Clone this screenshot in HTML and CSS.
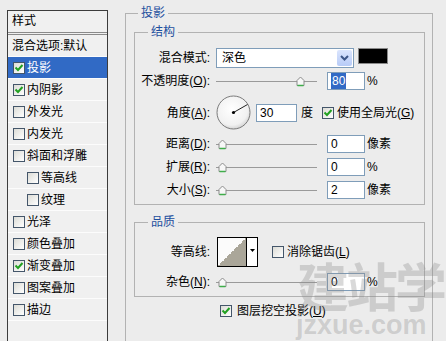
FILE: index.html
```html
<!DOCTYPE html>
<html lang="zh-CN">
<head>
  <meta charset="UTF-8">
  <title>图层样式 | 投影</title>
  <link rel="stylesheet" href="styles.css">
</head>
<body>
  <div class="dialog">
    <!-- style list on the left -->
    <div class="styles-list">
      <div class="list-head">样式</div>
      <div class="list-row plain">混合选项:默认</div>
      <div class="list-row selected"><span class="cb"><svg width="10" height="10" viewBox="0 0 10 10"><polyline points="1.5,4.5 4,7 8.5,2" fill="none" stroke="#21a121" stroke-width="2"/></svg></span>投影</div>
      <div class="list-row"><span class="cb"><svg width="10" height="10" viewBox="0 0 10 10"><polyline points="1.5,4.5 4,7 8.5,2" fill="none" stroke="#21a121" stroke-width="2"/></svg></span>内阴影</div>
      <div class="list-row"><span class="cb"></span>外发光</div>
      <div class="list-row"><span class="cb"></span>内发光</div>
      <div class="list-row"><span class="cb"></span>斜面和浮雕</div>
      <div class="list-row sub"><span class="cb"></span>等高线</div>
      <div class="list-row sub"><span class="cb"></span>纹理</div>
      <div class="list-row"><span class="cb"></span>光泽</div>
      <div class="list-row"><span class="cb"></span>颜色叠加</div>
      <div class="list-row"><span class="cb"><svg width="10" height="10" viewBox="0 0 10 10"><polyline points="1.5,4.5 4,7 8.5,2" fill="none" stroke="#21a121" stroke-width="2"/></svg></span>渐变叠加</div>
      <div class="list-row"><span class="cb"></span>图案叠加</div>
      <div class="list-row"><span class="cb"></span>描边</div>
    </div>

    <!-- settings on the right -->
    <div class="settings">
      <fieldset class="group outer">
        <legend class="legend-main">投影</legend>

        <fieldset class="group inner">
          <legend class="legend-sub">结构</legend>

          <div class="row">
            <div class="lbl">混合模式:</div>
            <div class="select">
              <span class="select-text">深色</span>
              <span class="select-btn"><svg width="9" height="6" viewBox="0 0 9 6"><polyline points="1,1 4.5,4.5 8,1" fill="none" stroke="#3d5687" stroke-width="2"/></svg></span>
            </div>
            <div class="swatch"></div>
          </div>

          <div class="row">
            <div class="lbl">不透明度(<u>O</u>):</div>
            <div class="slider"><svg class="thumb" style="margin-left: 80px" width="9" height="11" viewBox="0 0 9 11"><path d="M1 4.5 L4.5 1 L8 4.5 V9.5 H1 Z" fill="#f7f7f7" stroke="#8c8c8c"/><line x1="1.5" y1="9.5" x2="7.5" y2="9.5" stroke="#3fae4a" stroke-width="1.5"/></svg></div>
            <div class="num"><span class="sel-text">80</span></div>
            <span class="unit">%</span>
          </div>

          <div class="row tall">
            <div class="lbl">角度(<u>A</u>):</div>
            <svg class="dial" width="35" height="35" viewBox="0 0 35 35">
              <defs>
                <radialGradient id="dialFill" cx="45%" cy="40%" r="60%">
                  <stop offset="0" stop-color="#ffffff"/>
                  <stop offset="0.8" stop-color="#f1f1f1"/>
                  <stop offset="1" stop-color="#d6d6d6"/>
                </radialGradient>
              </defs>
              <circle cx="17.5" cy="17.5" r="16.5" fill="url(#dialFill)" stroke="#7a7a7a"/>
              <line x1="17.5" y1="17.5" x2="31.5" y2="9.5" stroke="#222" stroke-width="1"/>
              <circle cx="17.5" cy="17.5" r="1.6" fill="#000"/>
            </svg>
            <div class="num angle">30</div>
            <span class="unit deg">度</span>
            <span class="cb global"><svg width="10" height="10" viewBox="0 0 10 10"><polyline points="1.5,4.5 4,7 8.5,2" fill="none" stroke="#21a121" stroke-width="2"/></svg></span>
            <span class="cb-text">使用全局光(<u>G</u>)</span>
          </div>

          <div class="row">
            <div class="lbl">距离(<u>D</u>):</div>
            <div class="slider"><svg class="thumb" style="margin-left: 2px" width="9" height="11" viewBox="0 0 9 11"><path d="M1 4.5 L4.5 1 L8 4.5 V9.5 H1 Z" fill="#f7f7f7" stroke="#8c8c8c"/><line x1="1.5" y1="9.5" x2="7.5" y2="9.5" stroke="#3fae4a" stroke-width="1.5"/></svg></div>
            <div class="num">0</div>
            <span class="unit">像素</span>
          </div>

          <div class="row">
            <div class="lbl">扩展(<u>R</u>):</div>
            <div class="slider"><svg class="thumb" style="margin-left: 2px" width="9" height="11" viewBox="0 0 9 11"><path d="M1 4.5 L4.5 1 L8 4.5 V9.5 H1 Z" fill="#f7f7f7" stroke="#8c8c8c"/><line x1="1.5" y1="9.5" x2="7.5" y2="9.5" stroke="#3fae4a" stroke-width="1.5"/></svg></div>
            <div class="num">0</div>
            <span class="unit">%</span>
          </div>

          <div class="row">
            <div class="lbl">大小(<u>S</u>):</div>
            <div class="slider"><svg class="thumb" style="margin-left: 2px" width="9" height="11" viewBox="0 0 9 11"><path d="M1 4.5 L4.5 1 L8 4.5 V9.5 H1 Z" fill="#f7f7f7" stroke="#8c8c8c"/><line x1="1.5" y1="9.5" x2="7.5" y2="9.5" stroke="#3fae4a" stroke-width="1.5"/></svg></div>
            <div class="num">2</div>
            <span class="unit">像素</span>
          </div>
        </fieldset>

        <fieldset class="group inner quality">
          <legend class="legend-sub">品质</legend>

          <div class="row contour-row">
            <div class="lbl">等高线:</div>
            <div class="contour"></div>
            <div class="contour-drop"><svg width="5" height="3" viewBox="0 0 5 3"><path d="M0 0 H5 L2.5 3 Z" fill="#000"/></svg></div>
            <span class="cb aa"></span>
            <span class="cb-text">消除锯齿(<u>L</u>)</span>
          </div>

          <div class="row">
            <div class="lbl">杂色(<u>N</u>):</div>
            <div class="slider"><svg class="thumb" style="margin-left: 2px" width="9" height="11" viewBox="0 0 9 11"><path d="M1 4.5 L4.5 1 L8 4.5 V9.5 H1 Z" fill="#f7f7f7" stroke="#8c8c8c"/><line x1="1.5" y1="9.5" x2="7.5" y2="9.5" stroke="#3fae4a" stroke-width="1.5"/></svg></div>
            <div class="num">0</div>
            <span class="unit">%</span>
          </div>
        </fieldset>

        <div class="row knockout">
          <span class="cb"><svg width="10" height="10" viewBox="0 0 10 10"><polyline points="1.5,4.5 4,7 8.5,2" fill="none" stroke="#21a121" stroke-width="2"/></svg></span>
          <span class="cb-text">图层挖空投影(<u>U</u>)</span>
        </div>
      </fieldset>
    </div>
  </div>

  <!-- site watermark over the dialog -->
  <div class="watermark">
    <div class="wm-big">建站学</div>
    <div class="wm-small">jzxue.com</div>
  </div>
</body>
</html>
```

FILE: styles.css
```css
body {
  margin: 0;
  height: 341px;
  overflow: hidden;
  position: relative;
  background-color: #ececec;
  color: #000;
  font-family: "Liberation Sans", "Noto Sans CJK SC", sans-serif;
  font-size: 12px;
  line-height: 16px;
}

.dialog {
  display: flex;
  align-items: flex-start;
}

/* left list */
.styles-list {
  width: 99px;
  height: 331px;
  margin: 10px 0 0 7px;
  border: 1px solid #3c3c3c;
  border-bottom: none;
  background-color: #f0f0f0;
}

.list-head {
  height: 21px;
  line-height: 21px;
  padding-left: 4px;
  border-bottom: 3px double #8a8a8a;
}

.list-row {
  display: flex;
  align-items: center;
  height: 21px;
  padding-left: 5px;
  border-bottom: 1px solid #fcfcfc;
  white-space: nowrap;
}

.list-row.plain {
  padding-left: 4px;
}

.list-row.sub {
  padding-left: 19px;
}

.list-row.selected {
  background-color: #316ac5;
  color: #fff;
}

.list-row .cb {
  margin-right: 2px;
}

/* checkbox */
.cb {
  display: inline-flex;
  align-items: center;
  justify-content: center;
  flex: none;
  width: 10px;
  height: 10px;
  border: 1px solid #44566a;
  background: linear-gradient(135deg, #dcdcd6, #ffffff);
}

.cb-text {
  margin-left: 3px;
  white-space: nowrap;
}

/* right side */
.settings {
  margin: 5px 0 0 17px;
}

.group {
  margin: 0;
  min-width: 0;
  border: 1px solid #b2b2b2;
}

.group legend {
  padding: 0 3px;
  color: #1d4f9e;
  line-height: 16px;
}

.outer {
  box-sizing: border-box;
  width: 308px;
  height: 336px;
  padding: 3px 7px 0 8px;
  border-bottom: none;
}

.legend-main {
  margin-left: 4px;
}

.inner {
  padding: 8px 0 4px 0;
}

.legend-sub {
  margin-left: 13px;
}

.quality {
  margin-top: 9px;
  padding-top: 7px;
}

.row {
  display: flex;
  align-items: center;
  height: 20px;
  white-space: nowrap;
}

.row + .row {
  margin-top: 3px;
}

.row.tall {
  height: 37px;
}

.row.contour-row {
  height: 30px;
}

.quality .row + .row {
  margin-top: 5px;
}

.lbl {
  width: 75px;
  margin-right: 6px;
  text-align: right;
  flex: none;
}

/* blend mode dropdown */
.select {
  display: flex;
  align-items: center;
  box-sizing: border-box;
  width: 138px;
  height: 20px;
  border: 1px solid #7f9db9;
  background-color: #fff;
}

.select-text {
  padding-left: 5px;
}

.select-btn {
  display: flex;
  align-items: center;
  justify-content: center;
  margin-left: auto;
  margin-right: 1px;
  width: 15px;
  height: 16px;
  border-radius: 2px;
  background: linear-gradient(#dbe5fd, #b7cbf7);
}

.swatch {
  align-self: flex-start;
  width: 28px;
  height: 14px;
  margin-left: 4px;
  border: 1px solid #8a8a8a;
  background-color: #000;
}

/* sliders */
.slider {
  display: flex;
  align-items: center;
  width: 101px;
  height: 11px;
  margin-right: 10px;
  background: linear-gradient(#9a9a9a, #9a9a9a) 0 5px / 100% 1px no-repeat;
}

.thumb {
  display: block;
}

.num {
  box-sizing: border-box;
  width: 38px;
  height: 18px;
  line-height: 16px;
  padding-left: 3px;
  border: 1px solid #7f9db9;
  background-color: #fff;
}

.sel-text {
  background-color: #316ac5;
  color: #fff;
  padding: 1px 1px;
}

.unit {
  margin-left: 2px;
}

/* angle row */
.dial {
  display: block;
  flex: none;
}

.num.angle {
  width: 41px;
  margin-left: 5px;
}

.unit.deg {
  margin-left: 4px;
}

.cb.global {
  margin-left: 9px;
}

/* contour row */
.contour {
  width: 28px;
  height: 28px;
  margin-left: 1px;
  border: 1px solid #000;
  background: linear-gradient(to bottom right, #fbfbfb 50%, #aaa699 50%);
}

.contour-drop {
  display: flex;
  justify-content: center;
  padding-top: 11px;
  box-sizing: border-box;
  width: 11px;
  height: 30px;
  border: 1px solid #000;
  border-left: none;
  background-color: #fff;
}

.cb.aa {
  margin-left: 14px;
}

.knockout {
  margin-top: 4px;
  padding-left: 86px;
}

.knockout .cb-text {
  margin-left: 5px;
}

/* watermark sits over everything */
.watermark {
  position: absolute;
  left: 297px;
  top: 258px;
  color: rgba(140, 140, 140, 0.33);
  font-weight: bold;
  pointer-events: none;
}

.wm-big {
  font-family: "Noto Sans CJK SC", sans-serif;
  font-size: 52px;
  line-height: 54px;
  letter-spacing: -3px;
}

.wm-small {
  font-family: "Liberation Sans", sans-serif;
  font-size: 27px;
  line-height: 26px;
  margin-left: -1px;
}
```
